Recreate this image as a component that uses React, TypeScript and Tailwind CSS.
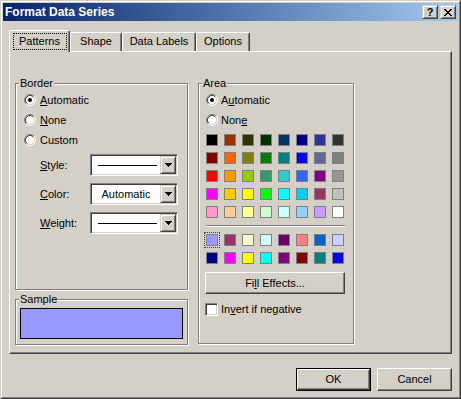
import React from "react";

const BTN =
  "border border-t-white border-l-white border-r-[#404040] border-b-[#404040] shadow-[inset_-1px_-1px_0_#808080]";
const SMALLBTN =
  "border border-t-[#d4d0c8] border-l-[#d4d0c8] border-r-[#404040] border-b-[#404040] shadow-[inset_1px_1px_0_#ffffff,inset_-1px_-1px_0_#808080]";
const SUNKEN =
  "border border-t-[#808080] border-l-[#808080] border-r-white border-b-white shadow-[inset_1px_1px_0_#404040,inset_-1px_-1px_0_#d4d0c8]";
const GROUP =
  "relative border border-[#808080] shadow-[inset_1px_1px_0_#ffffff,1px_1px_0_#ffffff]";

const PALETTE = [
  ["#000000", "#993300", "#333300", "#003300", "#003366", "#000080", "#333399", "#333333"],
  ["#800000", "#FF6600", "#808000", "#008000", "#008080", "#0000FF", "#666699", "#808080"],
  ["#FF0000", "#FF9900", "#99CC00", "#339966", "#33CCCC", "#3366FF", "#800080", "#969696"],
  ["#FF00FF", "#FFCC00", "#FFFF00", "#00FF00", "#00FFFF", "#00CCFF", "#993366", "#C0C0C0"],
  ["#FF99CC", "#FFCC99", "#FFFF99", "#CCFFCC", "#CCFFFF", "#99CCFF", "#CC99FF", "#FFFFFF"],
];
const CHART = [
  ["#9999FF", "#993366", "#FFFFCC", "#CCFFFF", "#660066", "#FF8080", "#0066CC", "#CCCCFF"],
  ["#000080", "#FF00FF", "#FFFF00", "#00FFFF", "#800080", "#800000", "#008080", "#0000FF"],
];

function Radio({ checked }: { checked?: boolean }) {
  return (
    <svg width="12" height="12" viewBox="0 0 12 12" className="shrink-0">
      <circle cx="6" cy="6" r="4.5" fill="#fff" />
      <path d="M2.11 9.89A5.5 5.5 0 0 1 9.89 2.11" fill="none" stroke="#808080" />
      <path d="M9.89 2.11A5.5 5.5 0 0 1 2.11 9.89" fill="none" stroke="#ffffff" />
      <path d="M2.82 9.18A4.5 4.5 0 0 1 9.18 2.82" fill="none" stroke="#404040" />
      <path d="M9.18 2.82A4.5 4.5 0 0 1 2.82 9.18" fill="none" stroke="#d4d0c8" />
      {checked && <circle cx="6" cy="6" r="2" fill="#000" />}
    </svg>
  );
}

function Arrow() {
  return (
    <svg width="7" height="4" viewBox="0 0 7 4" shapeRendering="crispEdges">
      <rect x="0" y="0" width="7" height="1" fill="#000" />
      <rect x="1" y="1" width="5" height="1" fill="#000" />
      <rect x="2" y="2" width="3" height="1" fill="#000" />
      <rect x="3" y="3" width="1" height="1" fill="#000" />
    </svg>
  );
}

function XGlyph() {
  const rects = [];
  for (let r = 0; r < 7; r++) {
    const a = Math.min(r, 6 - r);
    rects.push(<rect key={"a" + r} x={a} y={r} width="2" height="1" fill="#000" />);
    rects.push(<rect key={"b" + r} x={6 - a} y={r} width="2" height="1" fill="#000" />);
  }
  return (
    <svg width="8" height="7" viewBox="0 0 8 7" shapeRendering="crispEdges">
      {rects}
    </svg>
  );
}

function Combo({ children }: { children: React.ReactNode }) {
  return (
    <div className={`flex h-[22px] w-[88px] bg-white p-[1px] ${SUNKEN}`}>
      <div className="flex flex-1 items-center justify-center">{children}</div>
      <div className={`flex w-[16px] items-center justify-center bg-[#d4d0c8] ${SMALLBTN}`}>
        <Arrow />
      </div>
    </div>
  );
}

function Swatch({ c, selected }: { c: string; selected?: boolean }) {
  return (
    <div className="relative h-[12px] w-[12px] border border-[#808080]" style={{ backgroundColor: c }}>
      {selected && (
        <div className="absolute -inset-[3px] border border-dotted border-[#404040] bg-transparent" />
      )}
    </div>
  );
}

export default function App() {
  return (
    <div className="h-[399px] w-[461px] select-none bg-[#d4d0c8] font-['Liberation_Sans',Arial,sans-serif] text-[11px] leading-[13px] text-black">
      <div className="h-full w-full border border-t-[#d4d0c8] border-l-[#d4d0c8] border-r-[#404040] border-b-[#404040]">
        <div className="flex h-full w-full flex-col border border-t-white border-l-white border-r-[#808080] border-b-[#808080] p-[1px]">
          {/* Title bar */}
          <div className="flex h-[18px] items-center bg-linear-to-r from-[#0a246a] to-[#a6caf0] pl-[2px] pr-[2px]">
            <span className="flex-1 text-[12px] font-bold text-white">Format Data Series</span>
            <div className="flex gap-[2px]">
              <div className={`flex h-[14px] w-[16px] items-center justify-center bg-[#d4d0c8] font-bold ${SMALLBTN}`}>
                ?
              </div>
              <div className={`flex h-[14px] w-[16px] items-center justify-center bg-[#d4d0c8] ${SMALLBTN}`}>
                <XGlyph />
              </div>
            </div>
          </div>

          {/* Body */}
          <div className="flex flex-col px-[6px] pt-[9px]">
            {/* Tabs */}
            <div className="flex items-end">
              <div className="relative z-10 -mb-[1px] flex h-[22px] w-[61px] justify-center rounded-t-[2px] border-l border-r border-t border-t-white border-l-white border-r-[#404040] bg-[#d4d0c8] pt-[2px] shadow-[inset_-1px_0_0_#808080]">
                <span className="flex h-[17px] w-[54px] items-center justify-center border border-dotted border-black">
                  Patterns
                </span>
              </div>
              {[
                ["Shape", "w-[52px]"],
                ["Data Labels", "w-[74px]"],
                ["Options", "w-[54px]"],
              ].map(([t, w]) => (
                <div
                  key={t}
                  className={`flex h-[19px] ${w} items-center justify-center rounded-t-[2px] border-l border-r border-t border-t-white border-l-white border-r-[#404040] pb-[1px] shadow-[inset_-1px_0_0_#808080]`}
                >
                  {t}
                </div>
              ))}
            </div>

            {/* Panel */}
            <div className={`flex h-[303px] w-[443px] pl-[5px] pt-[31px] ${BTN}`}>
              {/* Left column */}
              <div className="flex w-[173px] flex-col">
                <div className={`${GROUP} h-[207px] px-[8px] pt-[6px]`}>
                  <span className="absolute -top-[7px] left-[3px] bg-[#d4d0c8] px-[1px]">Border</span>
                  <div className="flex h-[20px] items-center gap-[4px]">
                    <Radio checked />
                    <span>
                      <span className="underline">A</span>utomatic
                    </span>
                  </div>
                  <div className="flex h-[20px] items-center gap-[4px]">
                    <Radio />
                    <span>
                      <span className="underline">N</span>one
                    </span>
                  </div>
                  <div className="flex h-[20px] items-center gap-[4px]">
                    <Radio />
                    <span>Custom</span>
                  </div>
                  <div className="ml-[16px] mt-[4px] flex flex-col gap-[7px]">
                    <div className="flex items-center">
                      <span className="w-[50px]">
                        <span className="underline">S</span>tyle:
                      </span>
                      <Combo>
                        <div className="ml-[6px] mr-[3px] h-px flex-1 bg-black" />
                      </Combo>
                    </div>
                    <div className="flex items-center">
                      <span className="w-[50px]">
                        <span className="underline">C</span>olor:
                      </span>
                      <Combo>
                        <span>Automatic</span>
                      </Combo>
                    </div>
                    <div className="flex items-center">
                      <span className="w-[50px]">
                        <span className="underline">W</span>eight:
                      </span>
                      <Combo>
                        <div className="ml-[6px] mr-[3px] h-px flex-1 bg-black" />
                      </Combo>
                    </div>
                  </div>
                </div>

                <div className={`${GROUP} mt-[9px] h-[46px] px-[4px] pt-[8px]`}>
                  <span className="absolute -top-[7px] left-[3px] bg-[#d4d0c8] px-[1px]">Sample</span>
                  <div className="h-[31px] w-full border border-black bg-[#9999ff]" />
                </div>
              </div>

              {/* Area */}
              <div className={`${GROUP} ml-[10px] h-[261px] w-[156px] pl-[7px] pt-[6px]`}>
                <span className="absolute -top-[7px] left-[3px] bg-[#d4d0c8] px-[1px]">Area</span>
                <div className="flex h-[20px] items-center gap-[3px]">
                  <Radio checked />
                  <span>
                    A<span className="underline">u</span>tomatic
                  </span>
                </div>
                <div className="flex h-[20px] items-center gap-[3px]">
                  <Radio />
                  <span>
                    Non<span className="underline">e</span>
                  </span>
                </div>
                <div className="mt-[4px] grid w-[138px] grid-cols-8 gap-[6px]">
                  {PALETTE.flat().map((c, i) => (
                    <Swatch key={i} c={c} />
                  ))}
                </div>
                <div className="my-[7px] h-[2px] w-[139px] border-b border-t border-b-white border-t-[#808080]" />
                <div className="grid w-[138px] grid-cols-8 gap-[6px]">
                  {CHART.flat().map((c, i) => (
                    <Swatch key={i} c={c} selected={i === 0} />
                  ))}
                </div>
                <div className={`-ml-[1px] mt-[8px] flex h-[22px] w-[140px] items-center justify-center ${BTN}`}>
                  <span>
                    Fi<span className="underline">l</span>l Effects...
                  </span>
                </div>
                <div className="-ml-[1px] mt-[9px] flex items-center gap-[3px]">
                  <div className={`h-[13px] w-[13px] bg-white ${SUNKEN}`} />
                  <span>
                    In<span className="underline">v</span>ert if negative
                  </span>
                </div>
              </div>
            </div>

            {/* Buttons */}
            <div className="mt-[14px] flex justify-end gap-[6px]">
              <div className="h-[23px] w-[75px] border border-black">
                <div className={`flex h-full w-full items-center justify-center ${BTN}`}>OK</div>
              </div>
              <div className={`flex h-[23px] w-[75px] items-center justify-center ${BTN}`}>Cancel</div>
            </div>
          </div>
        </div>
      </div>
    </div>
  );
}
